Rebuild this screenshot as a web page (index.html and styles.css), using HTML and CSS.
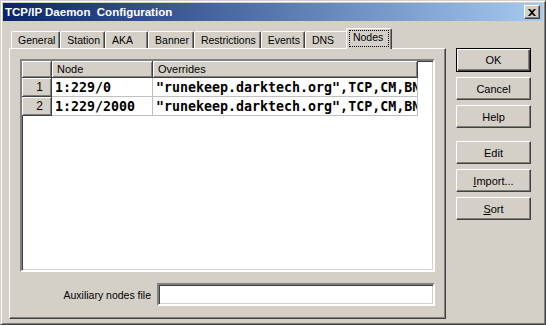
FILE: index.html
```html
<!DOCTYPE html>
<html>
<head>
    <title>TCP/IP Daemon Configuration</title>
    <link rel="stylesheet" href="styles.css">
</head>
<body>
    <div class="window">
        <div class="titlebar">
            <span class="title">TCP/IP Daemon&nbsp; Configuration</span>
            <button class="close-btn" aria-label="Close">
                <svg width="8" height="7" viewBox="0 0 8 7"><path d="M0 0h2l2 2 2-2h2L5 3.5 8 7H6L4 5 2 7H0l3-3.5z" fill="#000"/></svg>
            </button>
        </div>

        <div class="client">
            <div class="sheet">
                <div class="tabs">
                    <div class="tab">General</div>
                    <div class="tab">Station</div>
                    <div class="tab">AKA</div>
                    <div class="tab">Banner</div>
                    <div class="tab">Restrictions</div>
                    <div class="tab">Events</div>
                    <div class="tab">DNS</div>
                    <div class="tab selected"><span class="focus">Nodes</span></div>
                </div>

                <div class="panel">
                    <div class="grid-frame">
                        <table class="grid">
                            <colgroup>
                                <col class="col-num">
                                <col class="col-node">
                                <col class="col-over">
                            </colgroup>
                            <tr class="head">
                                <th></th>
                                <th>Node</th>
                                <th>Overrides</th>
                            </tr>
                            <tr>
                                <th class="num">1</th>
                                <td>1:229/0</td>
                                <td>"runekeep.darktech.org",TCP,CM,BND</td>
                            </tr>
                            <tr>
                                <th class="num">2</th>
                                <td>1:229/2000</td>
                                <td>"runekeep.darktech.org",TCP,CM,BND</td>
                            </tr>
                        </table>
                    </div>

                    <div class="aux-row">
                        <label for="aux-file">Auxiliary nodes file</label>
                        <input type="text" id="aux-file" class="field">
                    </div>
                </div>
            </div>

            <div class="buttons">
                <button class="btn default">OK</button>
                <button class="btn">Cancel</button>
                <button class="btn">Help</button>
                <button class="btn spaced">Edit</button>
                <button class="btn"><u>I</u>mport...</button>
                <button class="btn"><u>S</u>ort</button>
            </div>
        </div>
    </div>
</body>
</html>
```

FILE: styles.css
```css
body {
    margin: 0;
    background: #d4d0c8;
    font-family: "Liberation Sans", Arial, sans-serif;
    font-size: 10.5px;
    color: #000;
}

.window {
    width: 546px;
    height: 325px;
    box-sizing: border-box;
    padding: 2px;
    background: #d4d0c8;
    border: 1px solid;
    border-color: #d4d0c8 #404040 #404040 #d4d0c8;
    box-shadow: inset 1px 1px #fff, inset -1px -1px #808080;
}

.titlebar {
    height: 18px;
    display: flex;
    align-items: center;
    justify-content: space-between;
    padding-left: 2px;
    background: linear-gradient(to right, #0a246a, #a6caf0);
}
.title {
    color: #fff;
    font-weight: bold;
    font-size: 11.5px;
}
.close-btn {
    width: 16px;
    height: 14px;
    margin-right: 3px;
    padding: 0;
    display: flex;
    align-items: center;
    justify-content: center;
    background: #d4d0c8;
    border: 1px solid;
    border-color: #fff #404040 #404040 #fff;
    box-shadow: inset -1px -1px #808080;
}

.client {
    display: flex;
    padding: 7px 0 0 6px;
}

.sheet { width: 437px; }

.tabs {
    display: flex;
    height: 20px;
    padding-left: 2px;
    position: relative;
    z-index: 1;
}
.tab {
    box-sizing: border-box;
    min-width: 43px;
    height: 17px;
    margin-top: 3px;
    padding: 2px 4px 0 6px;
    border-left: 1px solid #fff;
    border-top: 1px solid #fff;
    border-right: 1px solid #404040;
    border-radius: 2px 2px 0 0;
    box-shadow: inset -1px 0 #808080;
    white-space: nowrap;
}
.tab.selected {
    height: 21px;
    margin: 0 -2px;
    padding: 1px 2px 0 2px;
    background: #d4d0c8;
    min-width: 46px;
}
.focus {
    display: block;
    height: 15px;
    padding: 0 3px;
    border: 1px dotted #000;
    line-height: 13px;
}

.panel {
    box-sizing: border-box;
    height: 271px;
    padding: 10px;
    border: 1px solid;
    border-color: #fff #404040 #404040 #fff;
    box-shadow: inset -1px -1px #808080;
}

.grid-frame {
    box-sizing: border-box;
    height: 213px;
    background: #fff;
    border: 2px solid;
    border-color: #808080 #fff #fff #808080;
    box-shadow: inset 1px 1px #404040, inset -1px -1px #d4d0c8;
    overflow: hidden;
}
.grid {
    table-layout: fixed;
    border-collapse: separate;
    border-spacing: 0;
    width: 396px;
}
.col-num { width: 30px; }
.col-node { width: 101px; }
.col-over { width: 265px; }

.grid th {
    box-sizing: border-box;
    background: #d4d0c8;
    font-weight: normal;
    font-size: 11px;
    text-align: left;
    padding: 0 0 0 5px;
    border-right: 1px solid #404040;
    border-bottom: 1px solid #404040;
    box-shadow: inset 1px 1px #fff, inset -1px -1px #808080;
    white-space: nowrap;
    overflow: hidden;
}
.grid .head th { height: 17px; }
.grid th.num {
    text-align: right;
    padding: 0 8px 0 0;
    font-size: 12px;
}
.grid td {
    height: 18px;
    padding: 0 0 0 3px;
    border-right: 1px solid #c0c0c0;
    border-bottom: 1px solid #c0c0c0;
    font-family: "DejaVu Sans Mono", monospace;
    font-weight: bold;
    font-size: 13.3px;
    white-space: nowrap;
    overflow: hidden;
}

.aux-row {
    display: flex;
    align-items: center;
    justify-content: flex-end;
    gap: 6px;
    margin-top: 11px;
}
.field {
    box-sizing: border-box;
    width: 278px;
    height: 23px;
    margin: 0;
    background: #fff;
    border: 2px solid;
    border-color: #808080 #fff #fff #808080;
    box-shadow: inset 1px 1px #404040, inset -1px -1px #d4d0c8;
    outline: none;
}

.buttons {
    display: flex;
    flex-direction: column;
    gap: 5px;
    margin-left: 10px;
    padding-top: 20px;
}
.btn {
    box-sizing: border-box;
    width: 75px;
    height: 23px;
    padding: 0;
    background: #d4d0c8;
    font-family: "Liberation Sans", Arial, sans-serif;
    font-size: 11px;
    color: #000;
    border: 1px solid;
    border-color: #fff #404040 #404040 #fff;
    box-shadow: inset -1px -1px #808080;
}
.btn.default {
    height: 24px;
    border: 1px solid #000;
    box-shadow: inset 1px 1px #fff, inset -1px -1px #404040, inset -2px -2px #808080;
}
.btn.spaced { margin-top: 8px; }
```
